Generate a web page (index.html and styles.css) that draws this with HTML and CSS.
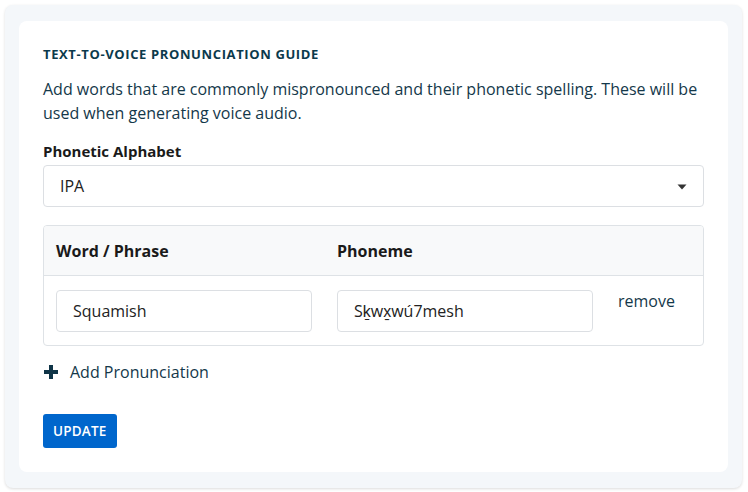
FILE: index.html
```html
<!DOCTYPE html>
<html>
<head>
<meta charset="utf-8">
<link rel="stylesheet" href="styles.css">
</head>
<body>
<div class="outer">
  <div class="card">
    <h2 class="title">Text-to-voice pronunciation guide</h2>
    <p class="desc">Add words that are commonly mispronounced and their phonetic spelling. These will be used when generating voice audio.</p>
    <label class="label">Phonetic Alphabet</label>
    <div class="select">
      <span>IPA</span>
      <svg class="caret" width="10" height="6" viewBox="0 0 10 6"><path d="M0.5 0.5 L9.5 0.5 L5 5.5 Z" fill="#333"/></svg>
    </div>
    <div class="table">
      <div class="thead">
        <div class="th">Word / Phrase</div>
        <div class="th">Phoneme</div>
        <div></div>
      </div>
      <div class="trow">
        <div class="input">Squamish</div>
        <div class="input">Sḵwx̱wú7mesh</div>
        <div class="remove">remove</div>
      </div>
    </div>
    <div class="add">
      <svg width="14" height="14" viewBox="0 0 14 14"><path d="M5 0h4v5h5v4H9v5H5V9H0V5h5z" fill="#0f3447"/></svg>
      <span>Add Pronunciation</span>
    </div>
    <button class="btn">UPDATE</button>
  </div>
</div>
</body>
</html>
```
FILE: styles.css
```css
* { box-sizing: border-box; }
html, body { margin: 0; padding: 0; background: #fff; }
body { font-family: "Open Sans", "Liberation Sans", sans-serif; color: #14384a; }
.outer {
  margin: 5px 6px 5px 5px;
  padding: 16px 14px;
  background: #f4f7fa;
  border-radius: 8px;
  box-shadow: 0 1px 3px rgba(0,0,0,0.14);
}
.card {
  background: #fff;
  border-radius: 8px;
  padding: 24px 24px 24px 24px;
}
.title {
  margin: 0;
  font-size: 13px;
  line-height: 18px;
  font-weight: 700;
  text-transform: uppercase;
  letter-spacing: 0.62px;
  color: #0b3a4c;
}
.desc {
  margin: 15px 0 0 0;
  font-size: 16px;
  line-height: 23.5px;
  color: #14384a;
}
.label {
  display: block;
  margin-top: 15px;
  font-size: 15px;
  line-height: 22px;
  font-weight: 700;
  color: #1a1a1a;
}
.select {
  margin-top: 3px;
  height: 42px;
  border: 1px solid #dcdfe3;
  border-radius: 4px;
  display: flex;
  align-items: center;
  justify-content: space-between;
  padding: 0 16px 0 16px;
  font-size: 16px;
  color: #222;
}
.caret { margin-top: 1px; }
.table {
  margin-top: 18px;
  border: 1px solid #dee2e6;
  border-radius: 4px;
  overflow: hidden;
}
.thead, .trow {
  display: grid;
  grid-template-columns: 256px 256px 1fr;
  column-gap: 25px;
  padding: 0 12px;
}
.thead {
  height: 50px;
  background: #f8f9fa;
  border-bottom: 1px solid #dee2e6;
  align-items: center;
}
.th {
  font-size: 16px;
  font-weight: 700;
  color: #1a1a1a;
  line-height: 22px;
}
.trow {
  padding-top: 14px;
  padding-bottom: 13px;
  align-items: start;
}
.input {
  height: 42px;
  border: 1px solid #dcdfe3;
  border-radius: 4px;
  padding: 0 16px;
  display: flex;
  align-items: center;
  font-size: 16px;
  color: #222;
}
.remove {
  font-size: 16px;
  line-height: 22px;
  color: #14384a;
}
.add {
  margin-top: 14px;
  display: flex;
  align-items: center;
  gap: 12px;
  height: 24px;
  font-size: 16px;
  color: #14384a;
  padding-left: 1px;
}
.btn {
  margin-top: 30px;
  display: block;
  height: 34px;
  padding: 0 10px;
  border: none;
  border-radius: 3px;
  background: #0066cc;
  color: #fff;
  font-family: "Open Sans", "Liberation Sans", sans-serif;
  font-size: 13.5px;
  font-weight: 600;
  letter-spacing: 0.2px;
}
```
